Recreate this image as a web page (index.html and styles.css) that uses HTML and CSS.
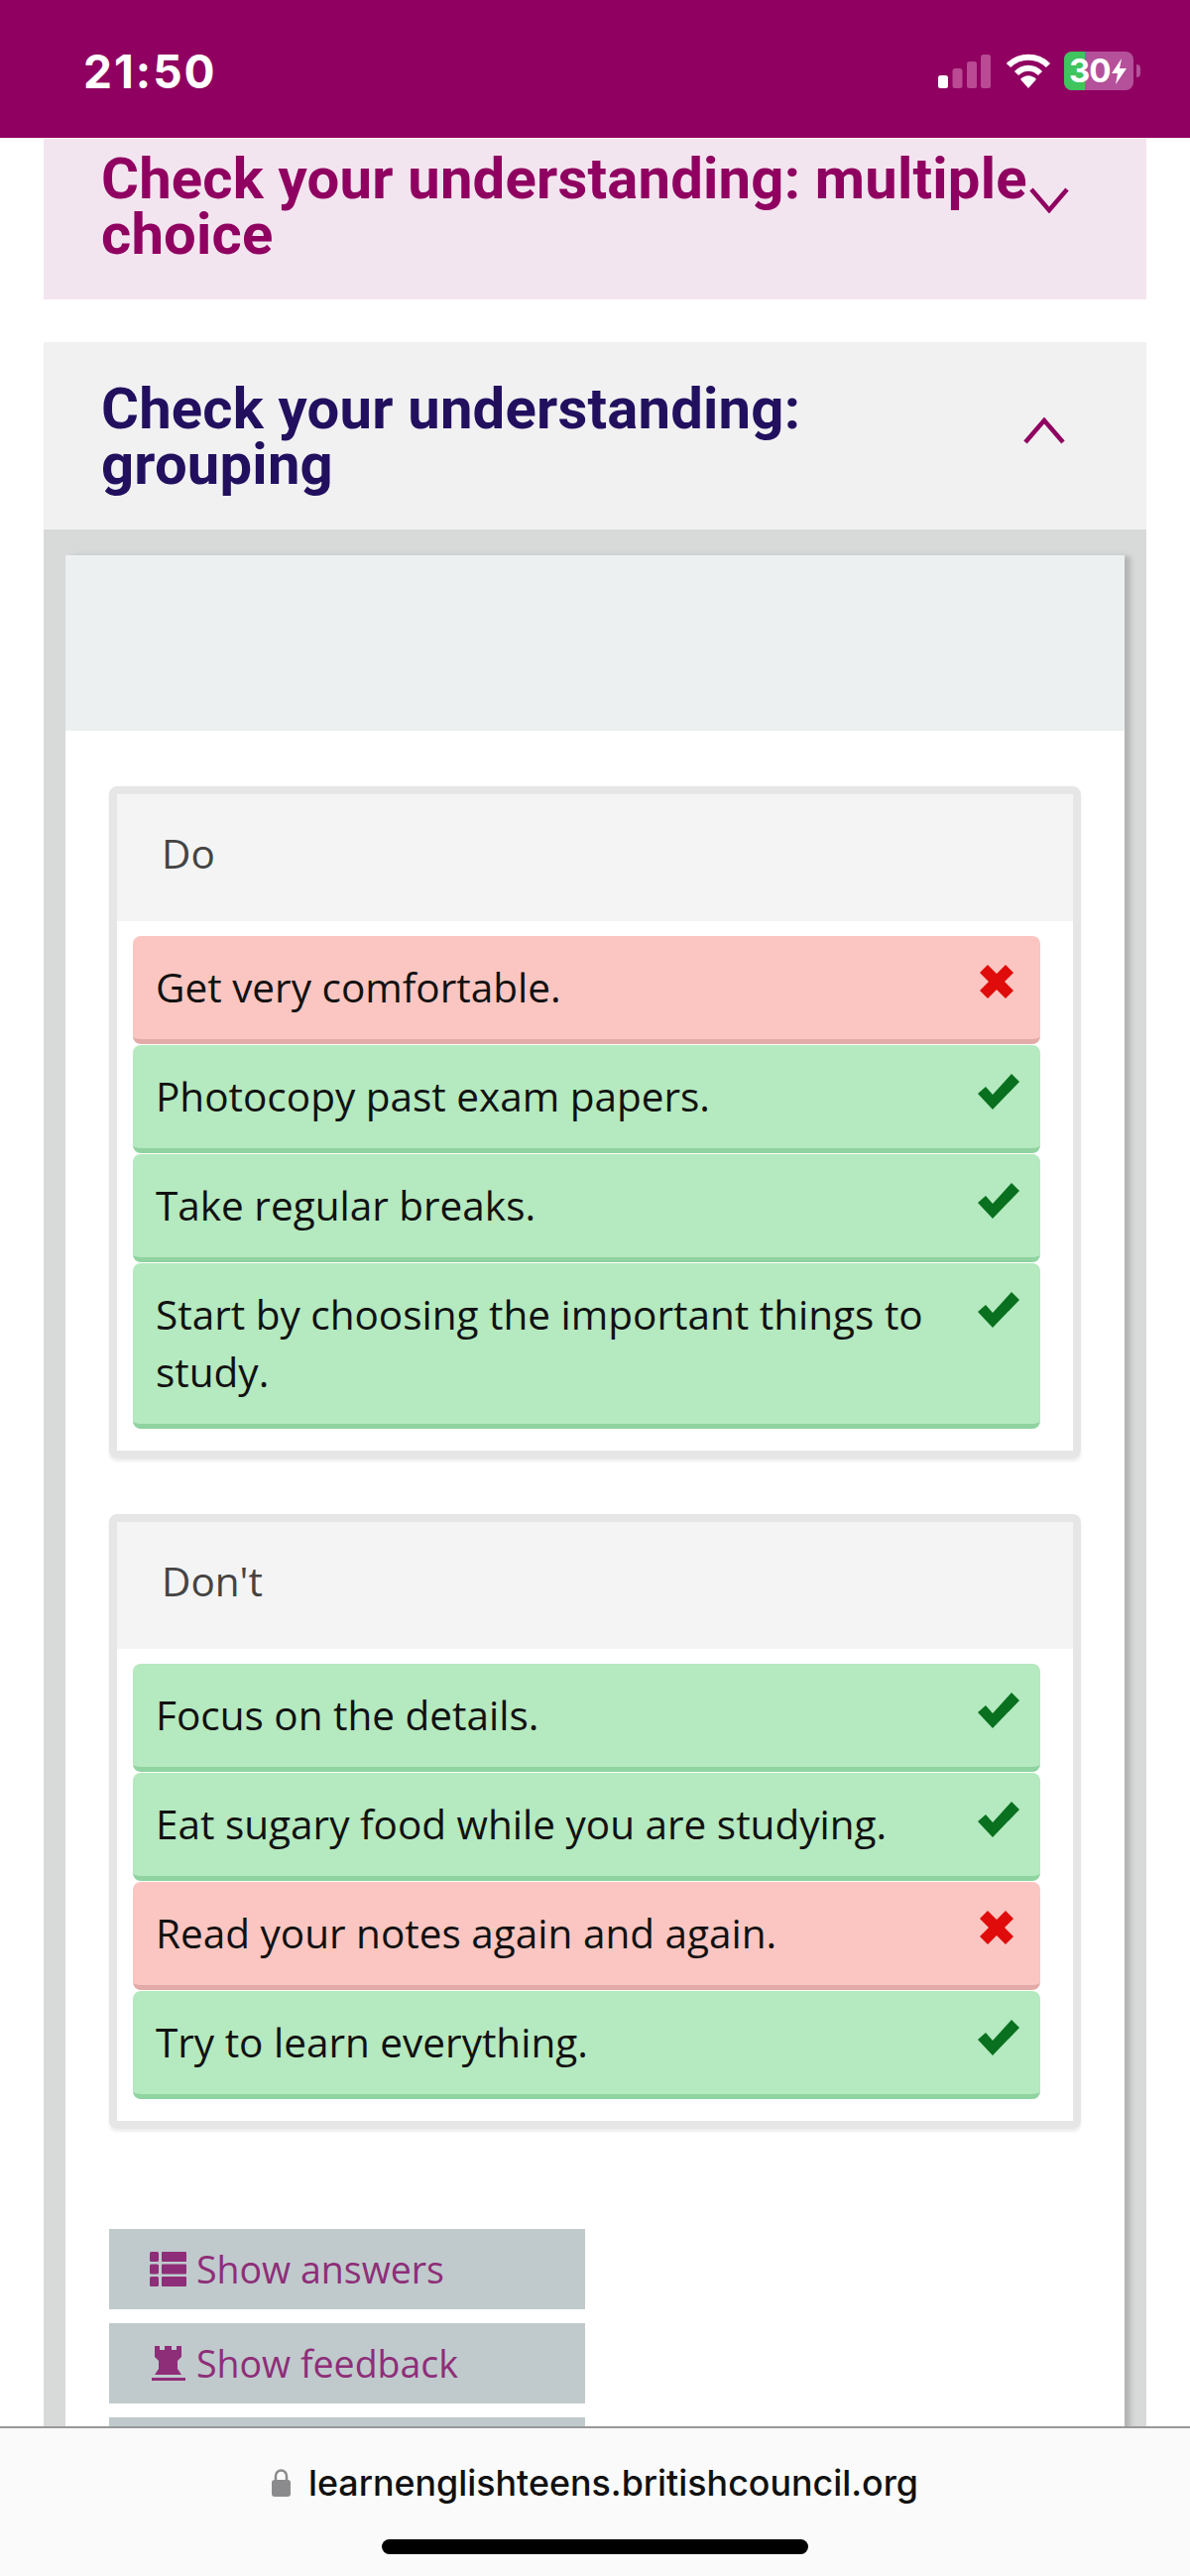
FILE: index.html
```html
<!DOCTYPE html>
<html lang="en">

<head>
    <meta charset="UTF-8">
    <title>Check your understanding</title>
    <link rel="stylesheet" href="styles.css">
</head>

<body>
    <div class="status">
        <span class="time">21:50</span>
        <div class="status-icons">
            <svg class="signal" width="53" height="34" viewBox="0 0 53 34">
                <rect x="0" y="21" width="10" height="13" rx="2.5" fill="#fff" />
                <rect x="14.500" y="14" width="10" height="20" rx="2.500" fill="#b94a93" />
                <rect x="29" y="7" width="10" height="27" rx="2.500" fill="#b94a93" />
                <rect x="43" y="0" width="10" height="34" rx="2.500" fill="#b94a93" />
            </svg>
            <svg class="wifi" width="46" height="35" viewBox="0 0 46 35">
                <path d="M3 12 C14 1 32 1 43 12" fill="none" stroke="#fff" stroke-width="6" />
                <path d="M11 20 C18 13 28 13 35 20" fill="none" stroke="#fff" stroke-width="6" />
                <path d="M15 26 C20 21 26 21 31 26 L23 35 Z" fill="#fff" />
            </svg>
            <div class="battery">
                <div class="battery-fill"></div>
                <span class="battery-text">30</span>
                <svg class="bolt" width="15" height="26" viewBox="0 0 15 26">
                    <path d="M10 0 L0 15 H6 L4 26 L15 10 H8 Z" fill="#fff" />
                </svg>
            </div>
            <div class="battery-nub"></div>
        </div>
    </div>

    <div class="page">
        <div class="acc acc-closed">
            <h2>Check your understanding: multiple choice</h2>
            <svg class="chev chev-down" width="40" height="26" viewBox="0 0 40 26">
                <path d="M2 2 L20 23 L38 2" fill="none" stroke="#8f0060" stroke-width="4.500" />
            </svg>
        </div>

        <div class="acc acc-open">
            <h2>Check your understanding: grouping</h2>
            <svg class="chev" width="44" height="27" viewBox="0 0 44 27">
                <path d="M3 25 L22 3 L41 25" fill="none" stroke="#8f0060" stroke-width="4.500" />
            </svg>
        </div>

        <div class="acc-body">
            <div class="panel">
                <div class="panel-top"></div>
                <div class="panel-main">
                    <div class="group">
                        <div class="group-title">Do</div>
                        <div class="items">
                            <div class="item bad">
                                <span>Get very comfortable.</span>
                                <svg class="mark" width="34" height="34" viewBox="0 0 34 34"><path d="M8 0 L17 9 L26 0 L34 8 L25 17 L34 26 L26 34 L17 25 L8 34 L0 26 L9 17 L0 8 Z" fill="#e00b0b" /></svg>
                            </div>
                            <div class="item good">
                                <span>Photocopy past exam papers.</span>
                                <svg class="mark" width="42" height="36" viewBox="0 0 42 36"><path d="M0 20 L8 13 L15 21 L34 0 L42 8 L15 36 Z" fill="#08701f" /></svg>
                            </div>
                            <div class="item good">
                                <span>Take regular breaks.</span>
                                <svg class="mark" width="42" height="36" viewBox="0 0 42 36"><path d="M0 20 L8 13 L15 21 L34 0 L42 8 L15 36 Z" fill="#08701f" /></svg>
                            </div>
                            <div class="item good">
                                <span>Start by choosing the important things to study.</span>
                                <svg class="mark" width="42" height="36" viewBox="0 0 42 36"><path d="M0 20 L8 13 L15 21 L34 0 L42 8 L15 36 Z" fill="#08701f" /></svg>
                            </div>
                        </div>
                    </div>

                    <div class="group">
                        <div class="group-title">Don't</div>
                        <div class="items">
                            <div class="item good">
                                <span>Focus on the details.</span>
                                <svg class="mark" width="42" height="36" viewBox="0 0 42 36"><path d="M0 20 L8 13 L15 21 L34 0 L42 8 L15 36 Z" fill="#08701f" /></svg>
                            </div>
                            <div class="item good">
                                <span>Eat sugary food while you are studying.</span>
                                <svg class="mark" width="42" height="36" viewBox="0 0 42 36"><path d="M0 20 L8 13 L15 21 L34 0 L42 8 L15 36 Z" fill="#08701f" /></svg>
                            </div>
                            <div class="item bad">
                                <span>Read your notes again and again.</span>
                                <svg class="mark" width="34" height="34" viewBox="0 0 34 34"><path d="M8 0 L17 9 L26 0 L34 8 L25 17 L34 26 L26 34 L17 25 L8 34 L0 26 L9 17 L0 8 Z" fill="#e00b0b" /></svg>
                            </div>
                            <div class="item good">
                                <span>Try to learn everything.</span>
                                <svg class="mark" width="42" height="36" viewBox="0 0 42 36"><path d="M0 20 L8 13 L15 21 L34 0 L42 8 L15 36 Z" fill="#08701f" /></svg>
                            </div>
                        </div>
                    </div>

                    <div class="buttons">
                        <div class="btn">
                            <svg class="btn-icon" width="37" height="35" viewBox="0 0 37 35">
                                <rect x="0" y="0" width="9" height="10" rx="1.500" />
                                <rect x="12" y="0" width="25" height="10" rx="1" />
                                <rect x="0" y="12.500" width="9" height="10" rx="1.500" />
                                <rect x="12" y="12.500" width="25" height="10" rx="1" />
                                <rect x="0" y="25" width="9" height="10" rx="1.500" />
                                <rect x="12" y="25" width="25" height="10" rx="1" />
                            </svg>
                            <span>Show answers</span>
                        </div>
                        <div class="btn">
                            <svg class="btn-icon" width="37" height="36" viewBox="0 0 37 36">
                                <path d="M5 0 H10 V4 H15 V0 H22 V4 H27 V0 H32 V11 L28 15 V23 L32 29 H5 L9 23 V15 L5 11 Z" />
                                <rect x="2" y="32" width="34" height="3" />
                            </svg>
                            <span>Show feedback</span>
                        </div>
                        <div class="btn"></div>
                    </div>
                </div>
            </div>
        </div>
    </div>

    <div class="address">
        <div class="url">
            <svg class="lock" width="19" height="28" viewBox="0 0 19 28">
                <path d="M4 12 V7 A5.500 5.500 0 0 1 15 7 V12" fill="none" stroke="#8b8b8e" stroke-width="2.500" />
                <rect x="0" y="11" width="19" height="17" rx="3" fill="#8b8b8e" />
            </svg>
            <span>learnenglishteens.britishcouncil.org</span>
        </div>
        <div class="home-bar"></div>
    </div>
</body>

</html>
```

FILE: styles.css
```css
* {
    padding: 0;
    margin: 0;
    box-sizing: border-box;
}

html,
body {
    height: 2598px;
    overflow: hidden;
    background-color: #fff;
}

body {
    position: relative;
    font-family: "Open Sans", "Liberation Sans", sans-serif;
}

/* phone status bar */
.status {
    height: 139px;
    background-color: #8f0060;
    display: flex;
    justify-content: space-between;
    padding: 50px 50px 0 84px;
    color: #fff;
}

.time {
    font-family: Inter, "Liberation Sans", sans-serif;
    font-weight: 700;
    font-size: 46px;
    line-height: 44px;
    letter-spacing: 2px;
}

.status-icons {
    display: flex;
    align-items: flex-start;
}

.signal {
    margin: 5px 15px 0 0;
}

.wifi {
    margin: 4px 13px 0 0;
}

.battery {
    position: relative;
    width: 70px;
    height: 39px;
    margin-top: 2px;
    border-radius: 8px;
    background-color: #b5509a;
    overflow: hidden;
    display: flex;
    align-items: center;
}

.battery-fill {
    position: absolute;
    left: 0;
    top: 0;
    width: 21px;
    height: 39px;
    background-color: #3fc45e;
}

.battery-text {
    position: relative;
    margin-left: 5px;
    font-family: Inter, "Liberation Sans", sans-serif;
    font-weight: 700;
    font-size: 33px;
    line-height: 39px;
    letter-spacing: -1px;
}

.bolt {
    position: relative;
    margin-left: 1px;
}

.battery-nub {
    width: 4px;
    height: 13px;
    margin: 15px 0 0 3px;
    border-radius: 0 4px 4px 0;
    background-color: #b5509a;
}

/* accordions */
.page {
    padding: 1px 44px 0;
}

.acc {
    display: flex;
    justify-content: space-between;
}

.acc h2 {
    font-family: Roboto, "Liberation Sans", sans-serif;
    font-weight: 700;
    font-size: 58px;
    line-height: 56px;
    letter-spacing: 0.2px;
}

.acc-closed {
    height: 162px;
    padding: 12px 78px 0 58px;
    background-color: #f3e5ef;
    color: #8f0060;
}

.acc-closed h2 {
    width: 940px;
}

.acc-open {
    height: 189px;
    margin-top: 43px;
    padding: 39px 81px 0 58px;
    background-color: #f1f1f2;
    color: #22105f;
}

.acc-open h2 {
    width: 810px;
}

.chev {
    flex-shrink: 0;
}

.chev-down {
    margin-top: 37px;
}

.acc-open .chev {
    margin-top: 37px;
}

.acc-body {
    padding: 26px 22px 0;
    background-color: #d8d9d9;
}

.panel {
    background-color: #fff;
    box-shadow: 7px 0 5px -1px #b4b4b4;
}

.panel-top {
    height: 177px;
    background-color: #ecf0f0;
}

.panel-main {
    padding: 56px 44px 0;
}

/* drop groups */
.group {
    border: 8px solid #e6e6e6;
    border-radius: 8px;
    margin-bottom: 56px;
    padding-bottom: 22px;
    box-shadow: 0 3px 3px #eee;
}

.group-title {
    height: 128px;
    padding: 31px 0 0 45px;
    background-color: #f4f4f4;
    color: #444;
    font-size: 40.500px;
    line-height: 58px;
}

.items {
    padding: 15px 33px 0 16px;
    display: flex;
    flex-direction: column;
    gap: 1px;
}

.item {
    display: flex;
    justify-content: space-between;
    gap: 40px;
    padding: 23px 21px 23px 23px;
    border-radius: 8px;
    border-bottom: 5px solid;
    color: #111;
    font-size: 40.500px;
    line-height: 58px;
}

.good {
    background-color: #b5e9bf;
    border-color: #8fd3a0;
}

.bad {
    background-color: #fbc6c1;
    border-color: #e3aba7;
}

.mark {
    flex-shrink: 0;
    margin-top: 6px;
}

.bad .mark {
    margin-right: 6px;
}

/* buttons at the bottom */
.buttons {
    padding-top: 45px;
    display: flex;
    flex-direction: column;
    gap: 14px;
}

.btn {
    width: 480px;
    height: 81px;
    padding-left: 41px;
    background-color: #c0cacd;
    color: #8e2e78;
    font-size: 37.500px;
    display: flex;
    align-items: center;
    gap: 10px;
}

.btn-icon {
    fill: #8e2e78;
    flex-shrink: 0;
}

/* safari address bar, sits over the page */
.address {
    position: absolute;
    left: 0;
    right: 0;
    bottom: 0;
    height: 151px;
    border-top: 2px solid #999;
    background-color: #fafafa;
}

.url {
    display: flex;
    justify-content: center;
    align-items: center;
    gap: 18px;
    padding-top: 35px;
    font-family: Inter, "Liberation Sans", sans-serif;
    font-weight: 500;
    font-size: 35.800px;
    line-height: 40px;
    color: #111;
}

.home-bar {
    width: 430px;
    height: 15px;
    margin: 37px auto 0;
    border-radius: 8px;
    background-color: #000;
}
```
